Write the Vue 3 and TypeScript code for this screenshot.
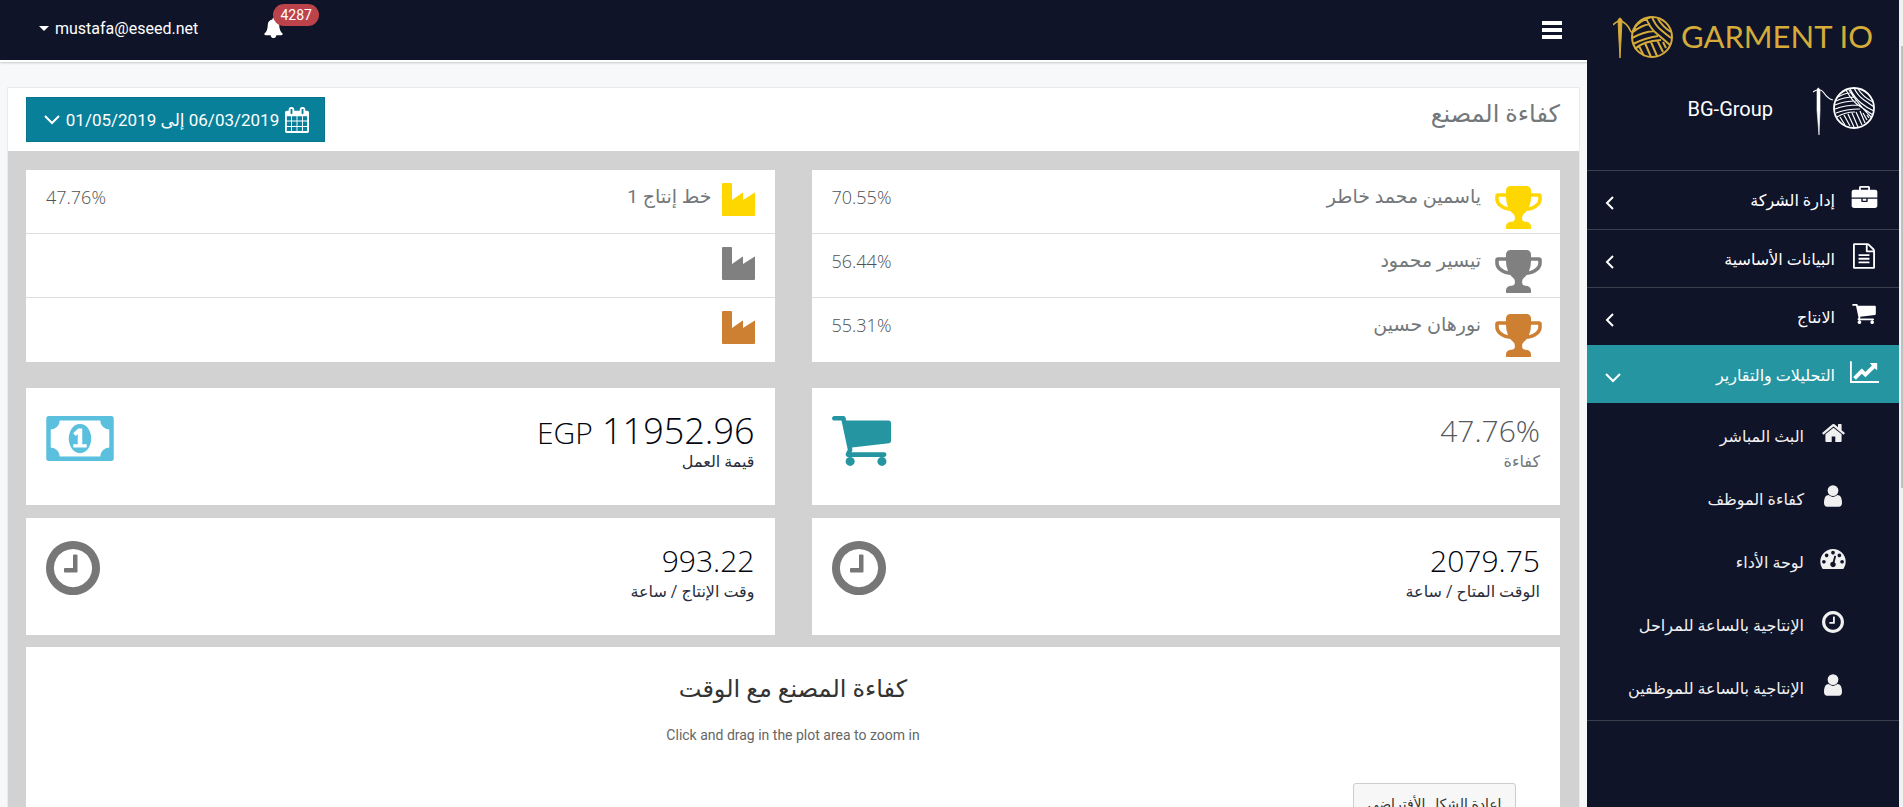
<script setup lang="ts">
interface Glyph {
  box: string
  d: string
}

const glyphs: Record<string, Glyph> = {
  briefcase: {
    box: '0 0 1792 1536',
    d: 'M640 256h512v-128h-512v128zm1152 640v480q0 66-47 113t-113 47h-1472q-66 0-113-47t-47-113v-480h672v160q0 26 19 45t45 19h320q26 0 45-19t19-45v-160h672zm-768 0v128h-256v-128h256zm768-480v384h-1792v-384q0-66 47-113t113-47h352v-160q0-40 28-68t68-28h576q40 0 68 28t28 68v160h352q66 0 113 47t47 113z',
  },
  file: {
    box: '128 0 1536 1792',
    d: 'M1596 380q28 28 48 76t20 88v1152q0 40-28 68t-68 28h-1344q-40 0-68-28t-28-68v-1600q0-40 28-68t68-28h896q40 0 88 20t76 48zm-444-244v376h376q-10-29-22-41l-313-313q-12-12-41-22zm384 1528v-1024h-416q-40 0-68-28t-28-68v-416h-768v1536h1280zm-1024-864q0-14 9-23t23-9h704q14 0 23 9t9 23v64q0 14-9 23t-23 9h-704q-14 0-23-9t-9-23v-64zm736 224q14 0 23 9t9 23v64q0 14-9 23t-23 9h-704q-14 0-23-9t-9-23v-64q0-14 9-23t23-9h704zm0 256q14 0 23 9t9 23v64q0 14-9 23t-23 9h-704q-14 0-23-9t-9-23v-64q0-14 9-23t23-9h704z',
  },
  cart: {
    box: '64 256 1664 1408',
    d: 'M704 1536q0 52-38 90t-90 38-90-38-38-90 38-90 90-38 90 38 38 90zm896 0q0 52-38 90t-90 38-90-38-38-90 38-90 90-38 90 38 38 90zm128-1088v512q0 24-16.500 42.500t-40.500 21.500l-1044 122q13 60 13 70 0 16-24 64h920q26 0 45 19t19 45-19 45-45 19h-1024q-26 0-45-19t-19-45q0-11 8-31.500t16-36 21.500-40 15.500-29.500l-177-823h-204q-26 0-45-19t-19-45 19-45 45-19h256q16 0 28.500 6.500t19.500 15.500 13 24.500 8 26 5.500 29.500 4.500 26h1201q26 0 45 19t19 45z',
  },
  chart: {
    box: '0 128 2048 1536',
    d: 'M2048 1536v128h-2048v-1536h128v1408h1920zm-128-1248v435q0 21-19.500 29.500t-35.500-7.500l-121-121-633 633q-10 10-23 10t-23-10l-233-233-416 416-192-192 585-585q10-10 23-10t23 10l233 233 464-464-121-121q-16-16-7.500-35.500t29.500-19.500h435q14 0 23 9t9 23z',
  },
  home: {
    box: '89 253 1614 1283',
    d: 'M1472 992v480q0 26-19 45t-45 19h-384v-384h-256v384h-384q-26 0-45-19t-19-45v-480q0-1 .5-3t.5-3l575-474 575 474q1 2 1 6zm223-69l-62 74q-8 9-21 11h-3q-13 0-21-7l-692-577-692 577q-12 8-24 7-13-2-21-11l-62-74q-8-10-7-23.500t11-21.500l719-599q32-26 76-26t76 26l244 204v-195q0-14 9-23t23-9h192q14 0 23 9t9 23v408l219 182q10 8 11 21.500t-7 23.500z',
  },
  user: {
    box: '256 128 1280 1536',
    d: 'M1536 1399q0 109-62.500 187t-150.500 78h-854q-88 0-150.500-78t-62.500-187q0-85 8.500-160.500t31.500-152 58.500-131 94-89 134.500-34.500q131 128 313 128t313-128q76 0 134.500 34.500t94 89 58.500 131 31.500 152 8.500 160.500zm-256-887q0 159-112.500 271.500t-271.500 112.500-271.500-112.500-112.500-271.500 112.500-271.500 271.500-112.500 271.500 112.500 112.500 271.500z',
  },
  gauge: {
    box: '0 256 1792 1408',
    d: 'M384 1152q0-53-37.500-90.500t-90.500-37.500-90.500 37.500-37.500 90.500 37.500 90.500 90.500 37.500 90.500-37.500 37.500-90.500zm192-448q0-53-37.500-90.500t-90.500-37.500-90.500 37.500-37.500 90.500 37.500 90.500 90.500 37.500 90.500-37.500 37.500-90.500zm428 481l101-382q6-26-7.500-48.500t-38.500-29.500-48 6.500-30 39.500l-101 382q-60 5-107 43.500t-63 98.500q-20 77 20 146t117 89 146-20 89-117q16-60-6-117t-72-91zm660-33q0-53-37.500-90.500t-90.500-37.500-90.500 37.500-37.500 90.500 37.500 90.500 90.500 37.500 90.500-37.500 37.500-90.500zm-640-640q0-53-37.500-90.500t-90.500-37.500-90.500 37.500-37.500 90.500 37.500 90.500 90.500 37.500 90.500-37.500 37.500-90.500zm448 192q0-53-37.500-90.500t-90.500-37.500-90.500 37.500-37.500 90.500 37.500 90.500 90.500 37.500 90.500-37.500 37.500-90.500zm320 448q0 261-141 483-19 29-54 29h-1402q-35 0-54-29-141-221-141-483 0-182 71-348t191-286 286-191 348-71 348 71 286 191 191 286 71 348z',
  },
  clock: {
    box: '128 128 1536 1536',
    d: 'M1024 544v448q0 14-9 23t-23 9h-320q-14 0-23-9t-9-23v-64q0-14 9-23t23-9h224v-352q0-14 9-23t23-9h64q14 0 23 9t9 23zm416 352q0-148-73-273t-198-198-273-73-273 73-198 198-73 273 73 273 198 198 273 73 273-73 198-198 73-273zm224 0q0 209-103 385.500t-279.500 279.500-385.500 103-385.500-103-279.500-279.500-103-385.500 103-385.500 279.500-279.500 385.500-103 385.500 103 279.500 279.500 103 385.500z',
  },
  trophy: {
    box: '64 128 1664 1536',
    d: 'M522 883q-74-162-74-371h-256v96q0 78 94.500 162t235.500 113zm1078-275v-96h-256q0 209-74 371 141-29 235.500-113t94.500-162zm128-128v128q0 71-41.500 143t-112 130-173 97.500-215.500 44.500q-42 54-95 95-38 34-52.500 72.500t-14.500 89.500q0 54 30.500 91t97.500 37q75 0 133.500 45.500t58.500 114.500v64q0 14-9 23t-23 9h-832q-14 0-23-9t-9-23v-64q0-69 58.500-114.500t133.500-45.500q67 0 97.500-37t30.500-91q0-51-14.500-89.500t-52.500-72.500q-53-41-95-95-113-5-215.500-44.500t-173-97.500-112-130-41.500-143v-128q0-40 28-68t68-28h288v-96q0-66 47-113t113-47h576q66 0 113 47t47 113v96h288q40 0 68 28t28 68z',
  },
  calendar: {
    box: '64 0 1664 1792',
    d: 'M192 1664h288v-288h-288v288zm352 0h320v-288h-320v288zm-352-352h288v-320h-288v320zm352 0h320v-320h-320v320zm-352-384h288v-288h-288v288zm736 736h320v-288h-320v288zm-384-736h320v-288h-320v288zm768 736h288v-288h-288v288zm-384-352h320v-320h-320v320zm-352-864v-288q0-13-9.500-22.500t-22.500-9.500h-64q-13 0-22.500 9.500t-9.500 22.500v288q0 13 9.500 22.500t22.500 9.500h64q13 0 22.500-9.500t9.500-22.500zm736 864h288v-320h-288v320zm-384-384h320v-288h-320v288zm384 0h288v-288h-288v288zm32-480v-288q0-13-9.500-22.500t-22.500-9.500h-64q-13 0-22.500 9.500t-9.500 22.500v288q0 13 9.500 22.500t22.500 9.500h64q13 0 22.500-9.500t9.500-22.500zm384-64v1280q0 52-38 90t-90 38h-1408q-52 0-90-38t-38-90v-1280q0-52 38-90t90-38h128v-96q0-66 47-113t113-47h64q66 0 113 47t47 113v96h384v-96q0-66 47-113t113-47h64q66 0 113 47t47 113v96h128q52 0 90 38t38 90z',
  },
  bell: {
    box: '64 0 1664 1792',
    d: 'M1728 1408q0 52-38 90t-90 38h-448q0 106-75 181t-181 75-181-75-75-181h-448q-52 0-90-38t-38-90q50-42 91-88t85-119.500 74.500-158.500 50-206 19.500-260q0-152 117-282.500t307-158.500q-8-19-8-39 0-40 28-68t68-28 68 28 28 68q0 20-8 39 190 28 307 158.500t117 282.500q0 139 19.500 260t50 206 74.500 158.500 85 119.500 91 88z',
  },
  money: {
    box: '0 256 1920 1280',
    d: 'M768 1152h384v-96h-128v-448h-114l-148 137 77 80q42-37 55-57h2v288h-128v96zm512-256q0 70-21 142t-59.500 134-101.500 101-138 39-138-39-101.500-101-59.500-134-21-142 21-142 59.500-134 101.500-101 138-39 138 39 101.500 101 59.500 134 21 142zm512 256v-512q-106 0-181-75t-75-181h-1152q0 106-75 181t-181 75v512q106 0 181 75t75 181h1152q0-106 75-181t181-75zm128-832v1152q0 26-19 45t-45 19h-1792q-26 0-45-19t-19-45v-1152q0-26 19-45t45-19h1792q26 0 45 19t19 45z',
  },
  factory: {
    box: '0 0 33 33',
    d: 'M1 0h8q1 0 1 1v16l10-7q1-1 1 0v7l11-7q1-1 1 0v22q0 1-1 1h-31q-1 0-1-1v-31q0-1 1-1z',
  },
}

const menu = [
  { label: 'إدارة الشركة', icon: 'briefcase', open: false },
  { label: 'البيانات الأساسية', icon: 'file', open: false },
  { label: 'الانتاج', icon: 'cart', open: false },
  { label: 'التحليلات والتقارير', icon: 'chart', open: true },
]

const reports = [
  { label: 'البث المباشر', icon: 'home' },
  { label: 'كفاءة الموظف', icon: 'user' },
  { label: 'لوحة الأداء', icon: 'gauge' },
  { label: 'الإنتاجية بالساعة للمراحل', icon: 'clock' },
  { label: 'الإنتاجية بالساعة للموظفين', icon: 'user' },
]

const rankings = [
  {
    icon: 'trophy',
    rows: [
      { name: 'ياسمين محمد خاطر', score: '70.55%', medal: 'gold' },
      { name: 'تيسير محمود', score: '56.44%', medal: 'silver' },
      { name: 'نورهان حسين', score: '55.31%', medal: 'bronze' },
    ],
  },
  {
    icon: 'factory',
    rows: [
      { name: 'خط إنتاج 1', score: '47.76%', medal: 'gold' },
      { name: '', score: '', medal: 'silver' },
      { name: '', score: '', medal: 'bronze' },
    ],
  },
]

const stats = [
  { value: '47.76%', unit: '', label: 'كفاءة', icon: 'cart', tone: 'muted' },
  { value: '11952.96', unit: 'EGP', label: 'قيمة العمل', icon: 'money', tone: 'dark' },
  { value: '2079.75', unit: '', label: 'الوقت المتاح / ساعة', icon: 'clock', tone: 'dark' },
  { value: '993.22', unit: '', label: 'وقت الإنتاج / ساعة', icon: 'clock', tone: 'dark' },
]
</script>

<template>
  <div class="page" dir="rtl">
    <div class="scroll-track"><div class="scroll-thumb"></div></div>

    <aside class="sidebar">
      <a class="brand" href="#" dir="ltr">
        <svg class="brand-mark" viewBox="0 0 62 45" fill="none" stroke="currentColor" stroke-width="2" aria-hidden="true">
          <path d="M5 5q2-4 4 0l-1 20-1 18-1-18z" fill="currentColor" stroke-width="1" />
          <path d="M0 10Q5 4 10 7t7 8 6-2" stroke-width="1.600" />
          <circle cx="39" cy="22" r="20" />
          <path d="M20 17q9-7 17-8M19 23q11-6 22-7M20 29q12-6 25-8M22 34q8-8 26-9M33 3q4 10 10 15t14 12M39 2q3 8 9 13t10 8M45 4q5 8 13 13M38 2q-10 3-16 10M26 31l5 10M32 28l6 14M38 27l6 14M44 25l6 12M50 27l3 6" />
        </svg>
        <span>GARMENT IO</span>
      </a>

      <div class="company">
        <svg class="company-mark" viewBox="0 0 62 49" fill="none" stroke="currentColor" stroke-width="1.200" aria-hidden="true">
          <path d="M4 3q1-4 3 0l0 20-1 25-2-25z" fill="currentColor" stroke-width=".6" />
          <path d="M0 5Q7 0 11 6t9 7" />
          <circle cx="41" cy="21" r="20" stroke-width="1.800" />
          <path d="M25 10q7-4 12-4M23 14q8-4 18-4M22 18q9-4 21-4M22 22q10-4 23-4M23 26q10-4 24-4M24 30q8-5 18-5M33 3q6 11 12 15t15 10M37 2q5 9 11 14t13 8M41 1q4 8 10 12t10 7M45 2q5 8 15 13M36 3q8 13 23 28M27 30l5 8M31 28l6 11M35 27l6 13M39 26l6 14M43 25l6 13M47 24l5 12M50 26l4 7M54 28l2 3" />
        </svg>
        <span dir="ltr">BG-Group</span>
      </div>

      <nav>
        <a v-for="item in menu" :key="item.label" href="#" class="menu-item" :class="{ open: item.open }">
          <span class="menu-icon">
            <svg class="icon" :class="'i-' + item.icon" :viewBox="glyphs[item.icon].box" aria-hidden="true"><path :d="glyphs[item.icon].d" /></svg>
          </span>
          <span class="menu-label">{{ item.label }}</span>
          <svg v-if="item.open" class="caret-down" viewBox="0 0 16 10" aria-hidden="true"><path d="M1 1l7 7 7-7" /></svg>
          <svg v-else class="caret-side" viewBox="0 0 10 16" aria-hidden="true"><path d="M8 2L2 8l6 6" /></svg>
        </a>
        <div class="submenu">
          <a v-for="item in reports" :key="item.label" href="#" class="menu-item sub">
            <span class="menu-icon">
              <svg class="icon" :class="'i-' + item.icon" :viewBox="glyphs[item.icon].box" aria-hidden="true"><path :d="glyphs[item.icon].d" /></svg>
            </span>
            <span class="menu-label">{{ item.label }}</span>
          </a>
        </div>
      </nav>
    </aside>

    <div class="main">
      <header class="topbar">
        <button class="hamburger" type="button" aria-label="القائمة"><i></i><i></i><i></i></button>
        <div class="topbar-end">
          <button class="bell" type="button" aria-label="الإشعارات">
            <svg class="icon i-bell" :viewBox="glyphs.bell.box" aria-hidden="true"><path :d="glyphs.bell.d" /></svg>
            <span class="badge">4287</span>
          </button>
          <button class="account" type="button">
            <span dir="ltr">mustafa@eseed.net</span>
            <svg class="caret" viewBox="0 0 10 5" aria-hidden="true"><path d="M0 0h10l-5 5z" /></svg>
          </button>
        </div>
      </header>

      <main class="card">
        <div class="card-head">
          <h1>كفاءة المصنع</h1>
          <button class="range" type="button">
            <svg class="icon i-calendar" :viewBox="glyphs.calendar.box" aria-hidden="true"><path :d="glyphs.calendar.d" /></svg>
            <span>06/03/2019 إلى 01/05/2019</span>
            <svg class="caret-down" viewBox="0 0 16 10" aria-hidden="true"><path d="M1 1l7 7 7-7" /></svg>
          </button>
        </div>

        <div class="board">
          <div class="grid rankings">
            <ul v-for="list in rankings" :key="list.icon" class="panel ranking">
              <li v-for="row in list.rows" :key="row.medal" :class="list.icon">
                <svg class="icon" :class="['i-' + list.icon, row.medal]" :viewBox="glyphs[list.icon].box" aria-hidden="true"><path :d="glyphs[list.icon].d" /></svg>
                <span class="name">{{ row.name }}</span>
                <span class="score" dir="ltr">{{ row.score }}</span>
              </li>
            </ul>
          </div>

          <div class="grid stats">
            <section v-for="stat in stats" :key="stat.label" class="panel stat" :class="stat.tone">
              <div>
                <div class="value" :class="{ large: stat.unit }" dir="ltr"><small v-if="stat.unit">{{ stat.unit }}</small> {{ stat.value }}</div>
                <div class="caption">{{ stat.label }}</div>
              </div>
              <svg class="icon" :class="'s-' + stat.icon" :viewBox="glyphs[stat.icon].box" aria-hidden="true"><path :d="glyphs[stat.icon].d" /></svg>
            </section>
          </div>

          <section class="panel chart">
            <h2>كفاءة المصنع مع الوقت</h2>
            <p dir="ltr">Click and drag in the plot area to zoom in</p>
            <button class="reset" type="button">إعادة الشكل الأفتراضي</button>
          </section>
        </div>
      </main>
    </div>
  </div>
</template>

<style>
body {
  margin: 0;
  overflow: hidden;
}
</style>

<style scoped>
.page {
  display: flex;
  height: 100vh;
  overflow: hidden;
  background: #f7f8fa;
  color: #73777a;
  font-family: Roboto, "Noto Sans", "DejaVu Sans", sans-serif;
  font-size: 16px;
}
.page * {
  box-sizing: border-box;
}
button {
  border: 0;
  padding: 0;
  background: none;
  color: inherit;
  font: inherit;
  cursor: pointer;
}
a {
  color: inherit;
  text-decoration: none;
}
svg {
  display: block;
  flex: none;
}
.icon {
  fill: currentColor;
}

.scroll-track {
  flex: none;
  width: 4px;
  padding-top: 46px;
  background: #f1f1f1;
}
.scroll-thumb {
  width: 2px;
  height: 442px;
  margin-right: 0;
  background: #c1c1c1;
}

.sidebar {
  position: relative;
  z-index: 1;
  flex: none;
  width: 312px;
  background: #0f1429;
  color: #fff;
}
.brand {
  display: flex;
  align-items: center;
  justify-content: flex-end;
  gap: 6px;
  height: 60px;
  padding: 14px 26px 0 0;
  color: #d5ab3a;
  font-family: Lato, sans-serif;
  font-size: 31px;
  line-height: 42px;
  white-space: nowrap;
}
.brand-mark {
  width: 62px;
  height: 45px;
}
.brand span {
  padding-bottom: 3px;
}
.company {
  display: flex;
  gap: 40px;
  height: 110px;
  padding: 27px 24px 0 0;
  font-size: 20px;
  line-height: 44px;
}
.company-mark {
  width: 62px;
  height: 49px;
}
.menu-item {
  display: flex;
  align-items: center;
  height: 58px;
  padding: 2px 18px 0;
  border-top: 1px solid #3b404f;
}
.menu-item:first-child {
  height: 59px;
}
.menu-item.open {
  border-color: #2596a1;
  background: #2596a1;
}
.menu-icon {
  display: flex;
  justify-content: center;
  width: 34px;
  margin-bottom: 8px;
}
.menu-label {
  flex: 1;
  margin-right: 12px;
  font-size: 16px;
  line-height: 24px;
}
.caret-side,
.caret-down {
  fill: none;
  stroke: #fff;
  stroke-width: 2;
}
.caret-side {
  width: 10px;
  height: 16px;
  margin-top: 4px;
}
.caret-down {
  width: 16px;
  height: 10px;
}
.menu-item .caret-down {
  margin-top: 4px;
}
.submenu {
  padding: 2px 31px 0 0;
  border-bottom: 1px solid #3b404f;
}
.menu-item.sub {
  height: 63px;
  padding-top: 0;
  border: 0;
  color: #f0f0f0;
}
.i-briefcase {
  width: 27px;
  height: 22px;
}
.i-file {
  width: 22px;
  height: 26px;
}
.i-cart {
  width: 24px;
  height: 20px;
}
.i-chart {
  width: 29px;
  height: 22px;
}
.i-home {
  width: 23px;
  height: 18px;
}
.i-user {
  width: 18px;
  height: 22px;
}
.i-gauge {
  width: 26px;
  height: 20px;
}
.i-clock {
  width: 22px;
  height: 22px;
}
.i-bell {
  width: 19px;
  height: 20px;
}
.i-calendar {
  width: 24px;
  height: 26px;
}
.i-trophy {
  width: 47px;
  height: 43px;
}
.i-factory {
  width: 33px;
  height: 33px;
}

.main {
  flex: 1;
  min-width: 0;
}
.topbar {
  display: flex;
  align-items: center;
  justify-content: space-between;
  height: 62px;
  padding: 0 25px 0 39px;
  border-bottom: 2px solid #fff;
  background: #0f1429;
  box-shadow: 0 1px 2px #c4c6c9;
  color: #fff;
}
.hamburger {
  display: grid;
  gap: 3px;
  width: 20px;
}
.hamburger i {
  height: 4px;
  background: #fff;
}
.topbar-end {
  display: flex;
  align-items: center;
  align-self: flex-start;
  height: 56px;
  gap: 66px;
}
.bell {
  position: relative;
}
.badge {
  position: absolute;
  left: 9px;
  top: -14px;
  width: 46px;
  border-radius: 11px;
  background: #bd434a;
  font-size: 14px;
  line-height: 22px;
}
.account {
  display: flex;
  align-items: center;
  gap: 6px;
  font-size: 16px;
}
.caret {
  width: 10px;
  height: 5px;
  fill: #fff;
}

.card {
  margin: 25px 7px 0;
  border: 1px solid #e9ebee;
  background: #fff;
}
.card-head {
  display: flex;
  justify-content: space-between;
  height: 63px;
  padding: 9px 19px 0 18px;
}
h1,
h2 {
  margin: 0;
  font-weight: 400;
}
h1 {
  font-size: 24px;
  line-height: 34px;
}
.range {
  display: flex;
  align-items: center;
  justify-content: space-between;
  width: 299px;
  height: 45px;
  padding: 0 15px 0 17px;
  border: 1px solid #08748b;
  background: #08809a;
  color: #fff;
  font-size: 17px;
}
.board {
  padding: 19px 19px 0 18px;
  background: #d2d2d2;
}
.grid {
  display: grid;
  grid-template-columns: 1fr 1fr;
  column-gap: 37px;
}
.panel {
  background: #fff;
}
.ranking {
  margin: 0 0 26px;
  padding: 0;
  list-style: none;
}
.ranking li {
  display: flex;
  height: 64px;
  padding: 0 20px;
  border-bottom: 1px solid #dedede;
  font-size: 19px;
  line-height: 54px;
}
.ranking li:last-child {
  border: 0;
}
.ranking li.trophy {
  padding-right: 18px;
}
.ranking .i-trophy {
  margin: 16px 0 0 14px;
}
.ranking .i-factory {
  margin: 13px 0 0 10px;
}
.name {
  flex: 1;
}
.score {
  color: #4e5255;
  font-family: "Open Sans", sans-serif;
  font-size: 18px;
  font-weight: 300;
}
.gold {
  color: #ffd700;
}
.silver {
  color: #808080;
}
.bronze {
  color: #cd7f32;
}
.stats {
  row-gap: 13px;
}
.stat {
  display: flex;
  justify-content: space-between;
  height: 117px;
  padding: 23px 20px 0;
}
.stat.muted .value {
  color: #55595c;
}
.stat.dark {
  color: #2a2e3c;
}
.stat.dark .value {
  color: #02050f;
}
.value {
  height: 40px;
  font-family: "Open Sans", sans-serif;
  font-size: 30px;
  font-weight: 300;
  line-height: 40px;
  text-align: right;
}
.large {
  font-size: 36px;
}
.value small {
  font-size: 30px;
}
.caption {
  font-size: 16px;
  line-height: 22px;
}
.s-cart {
  width: 59px;
  height: 50px;
  margin-top: 5px;
  color: #2596a1;
}
.s-money {
  width: 68px;
  height: 45px;
  margin-top: 5px;
  color: #5bc0de;
}
.s-clock {
  width: 54px;
  height: 54px;
  color: #777;
}
.chart {
  height: 400px;
  margin-top: 12px;
  padding: 26px 44px 0;
}
h2 {
  color: #333;
  font-size: 24px;
  line-height: 32px;
  text-align: center;
}
.chart p {
  margin: 18px 0 0;
  color: #666;
  font-size: 14px;
  line-height: 24px;
  text-align: center;
}
.reset {
  width: 163px;
  height: 41px;
  margin-top: 36px;
  border: 1px solid #ccc;
  border-radius: 3px;
  background: #f7f7f7;
  color: #333;
  font-size: 14px;
}
</style>
